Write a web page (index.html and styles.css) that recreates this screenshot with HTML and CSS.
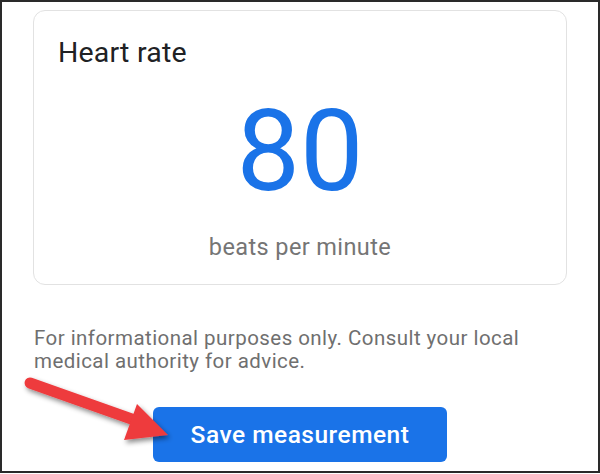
FILE: index.html
```html
<!DOCTYPE html>
<html>
<head>
<meta charset="utf-8">
<link rel="stylesheet" href="styles.css">
</head>
<body>
<div class="frame">
  <div class="card">
    <div class="card-title">Heart rate</div>
    <div class="value">80</div>
    <div class="unit">beats per minute</div>
  </div>
  <p class="disclaimer">For informational purposes only. Consult your local medical authority for advice.</p>
  <div class="actions">
    <button class="save-btn">Save measurement</button>
  </div>
  <svg class="arrow" width="600" height="474" viewBox="0 0 600 474">
    <defs>
      <filter id="sh" x="-20%" y="-40%" width="150%" height="200%">
        <feDropShadow dx="2" dy="3" stdDeviation="2.5" flood-color="#000" flood-opacity="0.45"/>
      </filter>
    </defs>
    <g filter="url(#sh)" fill="#ee3a3d">
      <line x1="30" y1="383" x2="140" y2="422" stroke="#ee3a3d" stroke-width="11" stroke-linecap="round"/>
      <polygon points="168,435 137,404 124,440"/>
    </g>
  </svg>
</div>
</body>
</html>
```
FILE: styles.css
```css
html, body {
  margin: 0;
  padding: 0;
  background: #fff;
}
.frame {
  position: relative;
  box-sizing: border-box;
  width: 600px;
  height: 473px;
  border: 2px solid #2a2a2a;
  padding: 8px 0 0 31px;
  font-family: Roboto, "Liberation Sans", sans-serif;
  overflow: hidden;
}
.card {
  box-sizing: border-box;
  width: 534px;
  height: 275px;
  border: 1.5px solid #e2e2e2;
  border-radius: 12px;
  padding: 26px 0 0 24px;
  display: flex;
  flex-direction: column;
}
.card-title {
  font-size: 28.5px;
  line-height: 32px;
  color: #202124;
  letter-spacing: 0.2px;
}
.value {
  margin: 27px 0 0 -24px;
  text-align: center;
  font-size: 113px;
  line-height: 112px;
  color: #1a73e8;
}
.unit {
  margin: 26px 0 0 -24px;
  text-align: center;
  font-size: 23.5px;
  line-height: 26px;
  color: #757575;
  letter-spacing: 0.4px;
}
.disclaimer {
  box-sizing: border-box;
  width: 525px;
  margin: 42px 0 0 1px;
  font-size: 20.5px;
  line-height: 23px;
  color: #6f6f6f;
  letter-spacing: 0.45px;
}
.actions {
  display: flex;
  margin: 34px 0 0 120px;
}
.save-btn {
  width: 294px;
  height: 55px;
  border: none;
  border-radius: 6px;
  background: #1a73e8;
  color: #fff;
  font-family: Roboto, "Liberation Sans", sans-serif;
  font-size: 24.5px;
  font-weight: 500;
  letter-spacing: 0.5px;
  padding: 0;
}
.arrow {
  position: absolute;
  left: -2px;
  top: -2px;
  pointer-events: none;
}
```
